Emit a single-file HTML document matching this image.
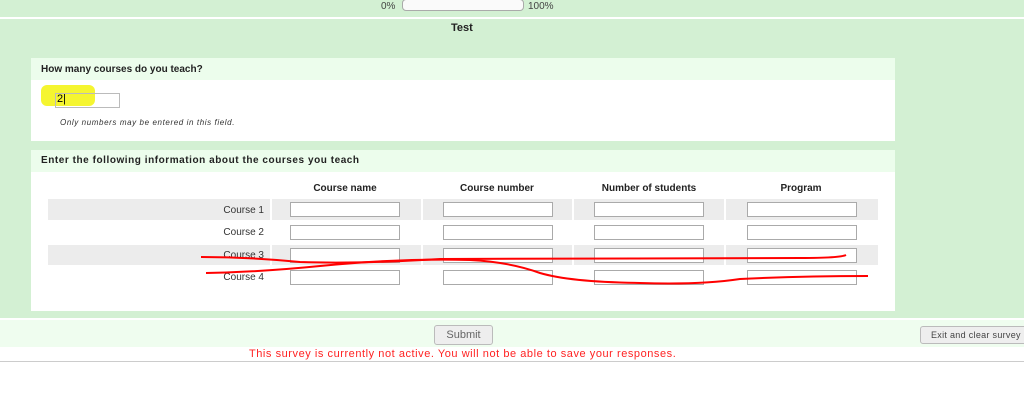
<!DOCTYPE html>
<html><head><style>
body{margin:0;width:1024px;height:406px;position:relative;background:#fff;font-family:"Liberation Sans",sans-serif;overflow:hidden}
.a{position:absolute}
.inp{position:absolute;width:108px;height:13px;border:1px solid #aaa;background:#fff}
.lab{position:absolute;font-size:10px;color:#333;text-align:right;width:80px}
.th{position:absolute;font-size:10px;font-weight:bold;color:#222;text-align:center;width:150px}
</style></head><body>
<div class="a" style="left:0;top:0;width:1024px;height:318px;background:#d3f0d3"></div>
<div class="a" style="left:0;top:17px;width:1024px;height:2px;background:#fff"></div>
<div class="a" style="left:381px;top:1px;font-size:10px;color:#444">0%</div>
<div class="a" style="left:402px;top:-1px;width:120px;height:10px;border:1px solid #aaa;border-radius:4px;background:#fafafa"></div>
<div class="a" style="left:528px;top:1px;font-size:10px;color:#444">100%</div>
<div class="a" style="left:451px;top:22px;font-size:11px;font-weight:bold;color:#222">Test</div>

<div class="a" style="left:31px;top:58px;width:864px;height:83px;background:#fff"></div>
<div class="a" style="left:31px;top:58px;width:864px;height:22px;background:#ecfdec"></div>
<div class="a" style="left:41px;top:64px;font-size:10px;font-weight:bold;color:#222">How many courses do you teach?</div>
<div class="a" style="left:41px;top:85px;width:54px;height:21px;background:#f5f530;border-radius:6px"></div>
<div class="a" style="left:55px;top:93px;width:63px;height:13px;border:1px solid #bbb"></div>
<div class="a" style="left:57px;top:93px;font-size:11px;color:#000">2|</div>
<div class="a" style="left:60px;top:118px;font-size:8px;font-style:italic;color:#333;letter-spacing:0.6px">Only numbers may be entered in this field.</div>

<div class="a" style="left:31px;top:150px;width:864px;height:161px;background:#fff"></div>
<div class="a" style="left:31px;top:150px;width:864px;height:22px;background:#ecfdec"></div>
<div class="a" style="left:41px;top:155px;font-size:10px;font-weight:bold;color:#222;letter-spacing:0.55px">Enter the following information about the courses you teach</div>
<div class="th" style="left:270px;top:183px">Course name</div>
<div class="th" style="left:422px;top:183px">Course number</div>
<div class="th" style="left:574px;top:183px">Number of students</div>
<div class="th" style="left:726px;top:183px">Program</div>

<div class="a" style="left:48px;top:199px;width:830px;height:21px;background:#ececec"></div>
<div class="a" style="left:48px;top:245px;width:830px;height:20px;background:#ececec"></div>
<div class="a" style="left:270px;top:199px;width:2px;height:21px;background:#fff"></div>
<div class="a" style="left:421px;top:199px;width:2px;height:21px;background:#fff"></div>
<div class="a" style="left:572px;top:199px;width:2px;height:21px;background:#fff"></div>
<div class="a" style="left:724px;top:199px;width:2px;height:21px;background:#fff"></div>
<div class="a" style="left:270px;top:245px;width:2px;height:20px;background:#fff"></div>
<div class="a" style="left:421px;top:245px;width:2px;height:20px;background:#fff"></div>
<div class="a" style="left:572px;top:245px;width:2px;height:20px;background:#fff"></div>
<div class="a" style="left:724px;top:245px;width:2px;height:20px;background:#fff"></div>

<div class="lab" style="left:184px;top:205px">Course 1</div>
<div class="lab" style="left:184px;top:227px">Course 2</div>
<div class="lab" style="left:184px;top:250px">Course 3</div>
<div class="lab" style="left:184px;top:272px">Course 4</div>

<div class="inp" style="left:290px;top:202px"></div><div class="inp" style="left:443px;top:202px"></div><div class="inp" style="left:594px;top:202px"></div><div class="inp" style="left:747px;top:202px"></div>
<div class="inp" style="left:290px;top:225px"></div><div class="inp" style="left:443px;top:225px"></div><div class="inp" style="left:594px;top:225px"></div><div class="inp" style="left:747px;top:225px"></div>
<div class="inp" style="left:290px;top:248px"></div><div class="inp" style="left:443px;top:248px"></div><div class="inp" style="left:594px;top:248px"></div><div class="inp" style="left:747px;top:248px"></div>
<div class="inp" style="left:290px;top:270px"></div><div class="inp" style="left:443px;top:270px"></div><div class="inp" style="left:594px;top:270px"></div><div class="inp" style="left:747px;top:270px"></div>

<svg class="a" style="left:0;top:0" width="1024" height="406">
<path d="M201 257 Q250 257 300 262 Q360 264 440 259 Q600 258 800 258 Q840 258 846 255" stroke="#f00" stroke-width="2" fill="none"/>
<path d="M206 273 Q260 272 320 266 Q400 258 470 260 Q510 262 540 273 Q570 282 640 283 Q700 285 740 279 Q800 276 868 276" stroke="#f00" stroke-width="2" fill="none"/>
</svg>

<div class="a" style="left:0;top:320px;width:1024px;height:27px;background:#effdef"></div>
<div class="a" style="left:434px;top:325px;width:57px;height:18px;border:1px solid #bbb;border-radius:3px;background:#eee;font-size:11px;color:#666;text-align:center;line-height:18px">Submit</div>
<div class="a" style="left:920px;top:326px;width:110px;height:16px;border:1px solid #bbb;border-radius:3px;background:#eee;font-size:9px;color:#444;line-height:16px;padding-left:10px;letter-spacing:0.3px">Exit and clear survey</div>
<div class="a" style="left:249px;top:348px;font-size:11px;color:#f22;letter-spacing:0.55px">This survey is currently not active. You will not be able to save your responses.</div>
<div class="a" style="left:0;top:361px;width:1024px;height:1px;background:#ccc"></div>
</body></html>
